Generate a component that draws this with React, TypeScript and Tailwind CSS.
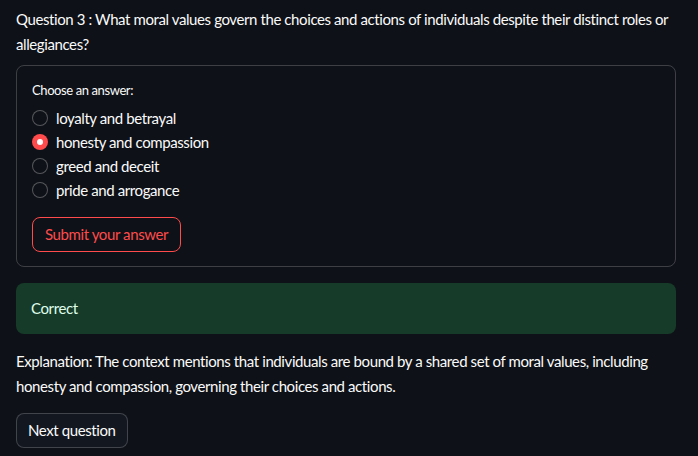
import React, { useState } from 'react';

const options = ['loyalty and betrayal', 'honesty and compassion', 'greed and deceit', 'pride and arrogance'];

export default function App() {
  const [selected, setSelected] = useState(1);

  return (
    <div
      className="min-h-[456px] w-[698px] bg-[#0e1117] pl-4 pr-[22px] pt-[7px] text-[15px] tracking-[-0.4px] text-[#fafafa]"
      style={{ fontFamily: '"Source Sans Pro", Lato, "Liberation Sans", sans-serif' }}
    >
      <p className="leading-[25px]">
        Question 3 : What moral values govern the choices and actions of individuals despite their distinct roles or allegiances?
      </p>

      <form
        onSubmit={(e) => e.preventDefault()}
        className="mt-[8px] rounded-lg border border-[#fafafa]/20 px-[15px] pt-[15px] pb-[14px]"
      >
        <p className="text-[13px] leading-[18px]">Choose an answer:</p>
        <div className="mt-[7px] flex flex-col">
          {options.map((opt, i) => (
            <label key={opt} className="flex h-[24px] cursor-pointer items-center gap-[8px]" onClick={() => setSelected(i)}>
              {selected === i ? (
                <span className="flex h-[16px] w-[16px] items-center justify-center rounded-full bg-[#ff4b4b]">
                  <span className="h-[6px] w-[6px] rounded-full bg-white" />
                </span>
              ) : (
                <span className="h-[16px] w-[16px] rounded-full border border-[#fafafa]/30 bg-[#0e1117]" />
              )}
              <span>{opt}</span>
            </label>
          ))}
        </div>
        <button
          type="submit"
          className="mt-[15px] h-[35px] rounded-lg border border-[#ff4b4b] bg-[#0e1117] px-[12px] text-[#ff4b4b]"
        >
          Submit your answer
        </button>
      </form>

      <div className="mt-[16px] flex h-[51px] items-center rounded-lg bg-[#173b29] px-[15px] text-[#dffde9]">
        Correct
      </div>

      <p className="mt-[15px] leading-[25px]">
        Explanation: The context mentions that individuals are bound by a shared set of moral values, including honesty and compassion, governing their choices and actions.
      </p>

      <button className="mt-[14px] h-[35px] rounded-lg border border-[#fafafa]/20 bg-[#131720] px-[11px]">
        Next question
      </button>
    </div>
  );
}
